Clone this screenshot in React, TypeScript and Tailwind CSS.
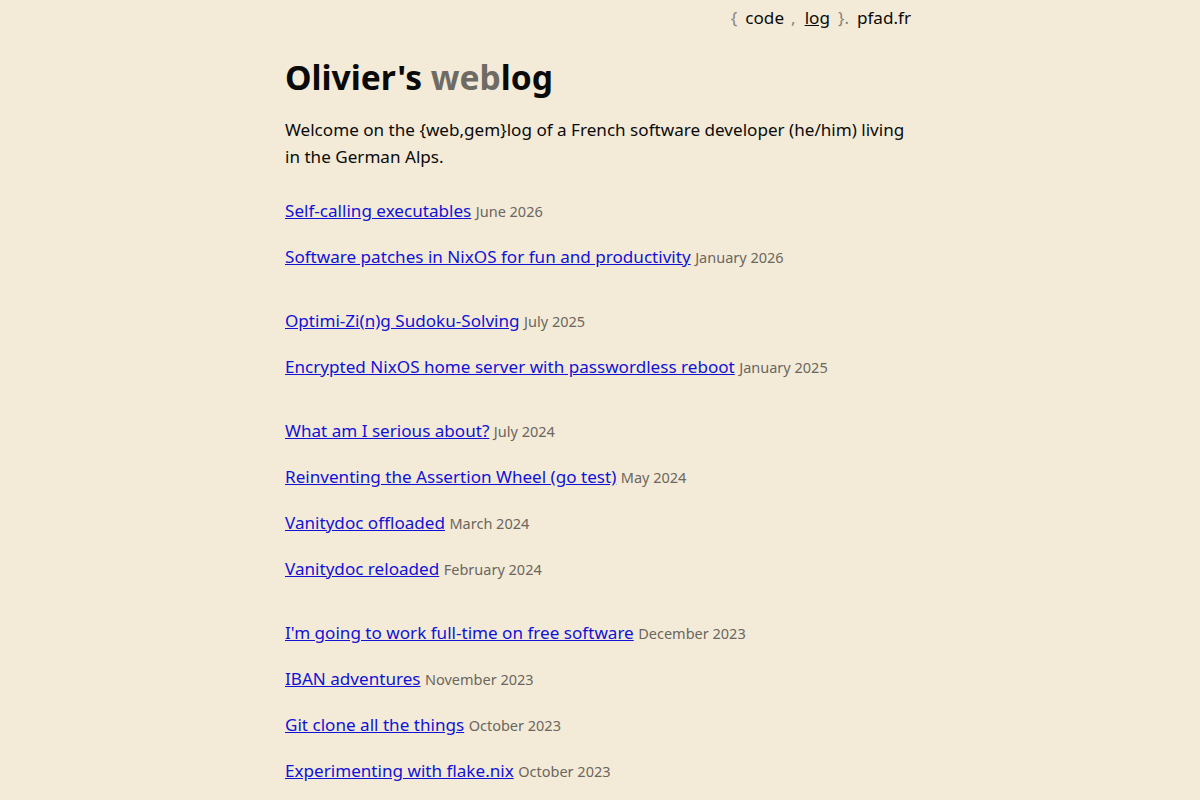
const groups: { title: string; date: string }[][] = [
  [
    { title: 'Self-calling executables', date: 'June 2026' },
    { title: 'Software patches in NixOS for fun and productivity', date: 'January 2026' },
  ],
  [
    { title: 'Optimi-Zi(n)g Sudoku-Solving', date: 'July 2025' },
    { title: 'Encrypted NixOS home server with passwordless reboot', date: 'January 2025' },
  ],
  [
    { title: 'What am I serious about?', date: 'July 2024' },
    { title: 'Reinventing the Assertion Wheel (go test)', date: 'May 2024' },
    { title: 'Vanitydoc offloaded', date: 'March 2024' },
    { title: 'Vanitydoc reloaded', date: 'February 2024' },
  ],
  [
    { title: "I'm going to work full-time on free software", date: 'December 2023' },
    { title: 'IBAN adventures', date: 'November 2023' },
    { title: 'Git clone all the things', date: 'October 2023' },
    { title: 'Experimenting with flake.nix', date: 'October 2023' },
    { title: 'Writing a Gemini server in Go', date: 'September 2023' },
  ],
];

export default function App() {
  return (
    <div className="min-h-screen bg-[#f3ebd8] text-[#0a0a0a] font-['Noto_Sans',sans-serif] text-[17.1px] leading-[27px]">
      <div className="mx-auto w-[630px]">
        {/* top nav */}
        <nav className="flex justify-end items-center h-[35px] pr-[4px]">
          <span className="text-[#8a857c] mr-[8px]">{'{'}</span>
          <a className="text-[#0a0a0a]">code</a>
          <span className="text-[#8a857c] ml-[7px] mr-[9px]">,</span>
          <a className="text-[#0a0a0a] underline">log</a>
          <span className="text-[#8a857c] ml-[8px] mr-[8px]">{'}.'}</span>
          <a className="text-[#0a0a0a]">pfad.fr</a>
        </nav>

        <h1 className="mt-[16px] text-[33.6px] leading-[52px] font-bold">
          Olivier's <span className="text-[#6e6a64]">web</span>log
        </h1>

        <p className="mt-[13px]">
          Welcome on the {'{web,gem}'}log of a French software developer (he/him) living in the German Alps.
        </p>

        <div className="mt-[27px]">
          {groups.map((posts, i) => (
            <ul key={i} className={i > 0 ? 'mt-[36px]' : ''}>
              {posts.map((p, j) => (
                <li key={p.title} className={j > 0 ? 'mt-[18px]' : ''}>
                  <a href="#" className="text-[#1212d6] underline">
                    {p.title}
                  </a>{' '}
                  <span className="text-[14.5px] text-[#6b665e]">{p.date}</span>
                </li>
              ))}
            </ul>
          ))}
        </div>
      </div>
    </div>
  );
}
